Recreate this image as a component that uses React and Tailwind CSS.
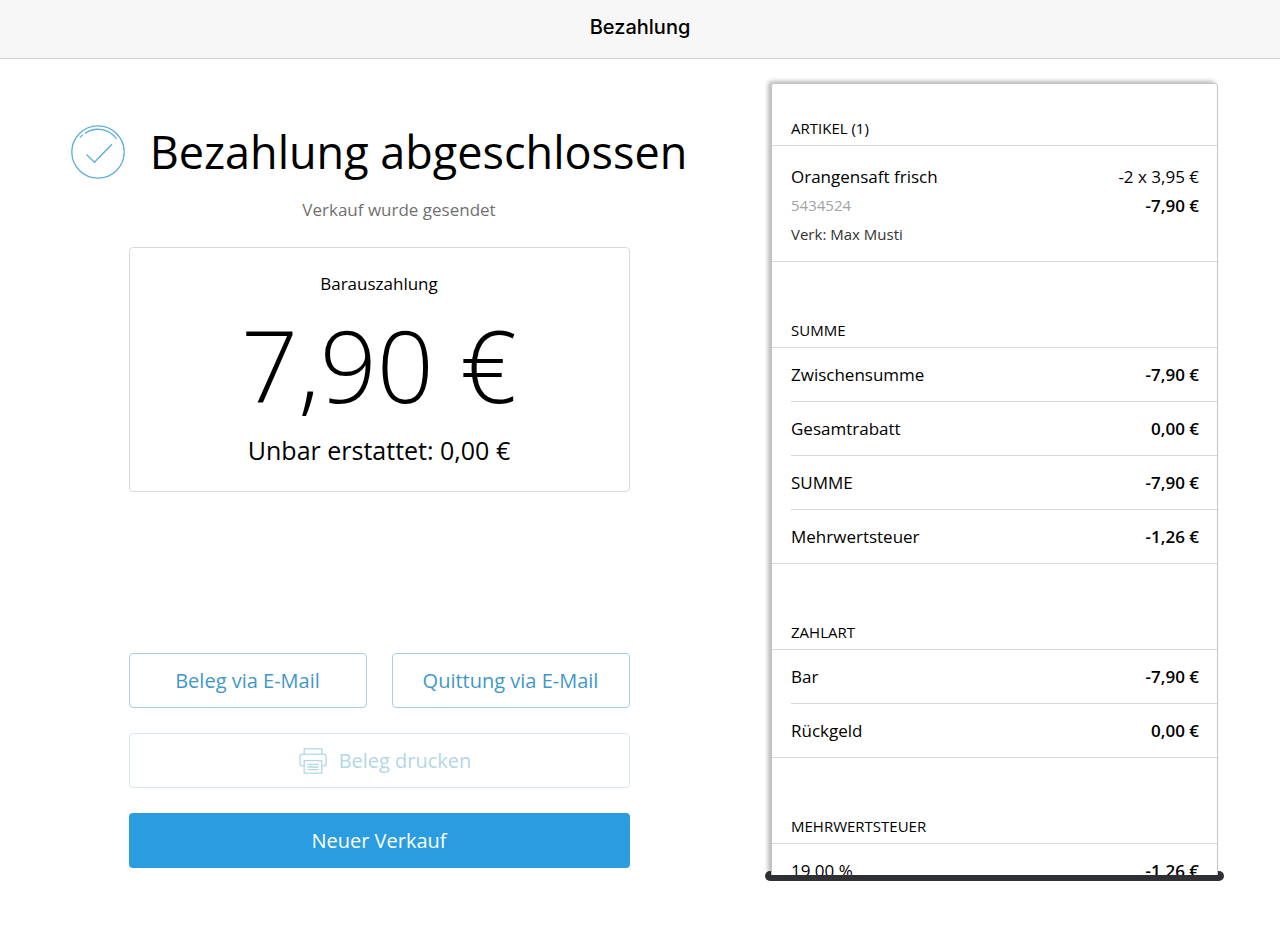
const sections = [
  {
    title: "SUMME",
    rows: [
      { label: "Zwischensumme", value: "-7,90 €" },
      { label: "Gesamtrabatt", value: "0,00 €" },
      { label: "SUMME", value: "-7,90 €" },
      { label: "Mehrwertsteuer", value: "-1,26 €" },
    ],
  },
  {
    title: "ZAHLART",
    rows: [
      { label: "Bar", value: "-7,90 €" },
      { label: "Rückgeld", value: "0,00 €" },
    ],
  },
  {
    title: "MEHRWERTSTEUER",
    rows: [{ label: "19,00 %", value: "-1,26 €" }],
  },
];

const CheckIcon = () => (
  <svg className="w-[54px] h-[54px] shrink-0" viewBox="0 0 54 54" fill="none" stroke="#5aaedb" strokeWidth="1.3" aria-hidden="true">
    <circle cx="27" cy="27" r="26.2" />
    <path d="M14 8.4A22.6 22.6 0 0 1 45.6 14" />
    <path d="M8.8 12.6L11.6 9.9" />
    <path d="M15.5 29.5L23.4 37.3L41 19.2" />
  </svg>
);

const PrinterIcon = () => (
  <svg className="w-[28px] h-[26px] shrink-0" viewBox="0 0 28 26" fill="none" stroke="currentColor" strokeWidth="1.3" aria-hidden="true">
    <path d="M5.2 6.2V0.8H22.8V6.2" />
    <path d="M5.2 17.8H3.2Q1 17.8 1 15.6V8.4Q1 6.2 3.2 6.2H24.8Q27 6.2 27 8.4V15.6Q27 17.8 24.8 17.8H22.8" />
    <path d="M5.2 12.6H22.8V25.2H5.2Z" />
    <path d="M8.4 16.3H19.6M8.4 19H19.6M8.4 21.7H19.6" />
  </svg>
);

const SectionTitle = ({ children }) => (
  <h2 className="flex items-end h-[86px] pl-[19px] pb-[7px] border-b border-[#d9d9d9] text-[15px] leading-5">
    {children}
  </h2>
);

const Receipt = () => (
  <div className="relative z-10 flex-1 min-h-0 mx-1.5 overflow-y-auto [scrollbar-width:none] bg-white rounded-t border border-b-0 border-[#c4c4c4] shadow-[-3px_-2px_4px_rgba(0,0,0,0.28)]">
    <section className="-mt-6">
      <SectionTitle>ARTIKEL (1)</SectionTitle>
      <div className="flex justify-between pl-[19px] pr-[18px] pt-4 h-[116px] border-b border-[#d9d9d9] text-[17px] leading-[29px]">
        <div>
          <p>Orangensaft frisch</p>
          <p className="text-[15px] leading-[29px] text-[#a3a3a3]">5434524</p>
          <p className="text-[15px] leading-[29px] text-[#333333]">Verk: Max Musti</p>
        </div>
        <div className="text-right">
          <p>-2 x 3,95 €</p>
          <p className="font-semibold">-7,90 €</p>
        </div>
      </div>
    </section>
    {sections.map((section) => (
      <section key={section.title}>
        <SectionTitle>{section.title}</SectionTitle>
        <dl className="text-[17px] leading-6">
          {section.rows.map((row) => (
            <div
              key={row.label}
              className="flex items-center justify-between h-[54px] ml-[19px] pr-[18px] border-b border-[#d9d9d9] last:ml-0 last:pl-[19px]"
            >
              <dt>{row.label}</dt>
              <dd className="font-semibold">{row.value}</dd>
            </div>
          ))}
        </dl>
      </section>
    ))}
  </div>
);

const App = () => {
  return (
    <div className="flex flex-col h-screen bg-white text-black font-['Open_Sans',sans-serif]">
      <header className="flex items-center justify-center h-[59px] pb-1 shrink-0 bg-[#f7f7f7] border-b border-[#cfcfcf]">
        <h1 className="font-['Inter',sans-serif] font-medium text-xl">Bezahlung</h1>
      </header>

      <main className="flex flex-1 min-h-0">
        <div className="flex flex-col items-center flex-1 pt-[60px] pb-[63px]">
          <div className="flex items-center gap-[25px]">
            <CheckIcon />
            <p className="text-[45px] leading-[66px] whitespace-nowrap">Bezahlung abgeschlossen</p>
          </div>
          <p className="pl-10 mt-[11px] text-[17px] leading-7 text-[#707070]">Verkauf wurde gesendet</p>

          <div className="w-[501px] h-[245px] mt-[23px] pt-6 border border-[#d9d9d9] rounded text-center">
            <p className="text-[17px] leading-6">Barauszahlung</p>
            <p className="text-[100px] leading-[136px] font-light">7,90 €</p>
            <p className="text-[25px] leading-9">Unbar erstattet: 0,00 €</p>
          </div>

          <div className="grid grid-cols-2 gap-[25px] w-[501px] mt-auto text-xl">
            <button type="button" className="h-[55px] rounded border border-[#a5cfdf] text-[#3f98c8]">
              Beleg via E-Mail
            </button>
            <button type="button" className="h-[55px] rounded border border-[#a5cfdf] text-[#3f98c8]">
              Quittung via E-Mail
            </button>
            <button
              type="button"
              disabled
              className="flex items-center justify-center col-span-2 h-[55px] pl-3 gap-3 rounded border border-[#d5e8ed] text-[#b2d7e6]"
            >
              <PrinterIcon />
              Beleg drucken
            </button>
            <button type="button" className="col-span-2 h-[55px] rounded bg-[#2a9ce0] text-white">
              Neuer Verkauf
            </button>
          </div>
        </div>

        <aside className="flex flex-col w-[459px] ml-[7px] mr-14 pt-6 pb-[50px]">
          <Receipt />
          <div className="h-2.5 -mt-1 rounded-full bg-[#303134]" />
        </aside>
      </main>
    </div>
  );
};

export default App;
